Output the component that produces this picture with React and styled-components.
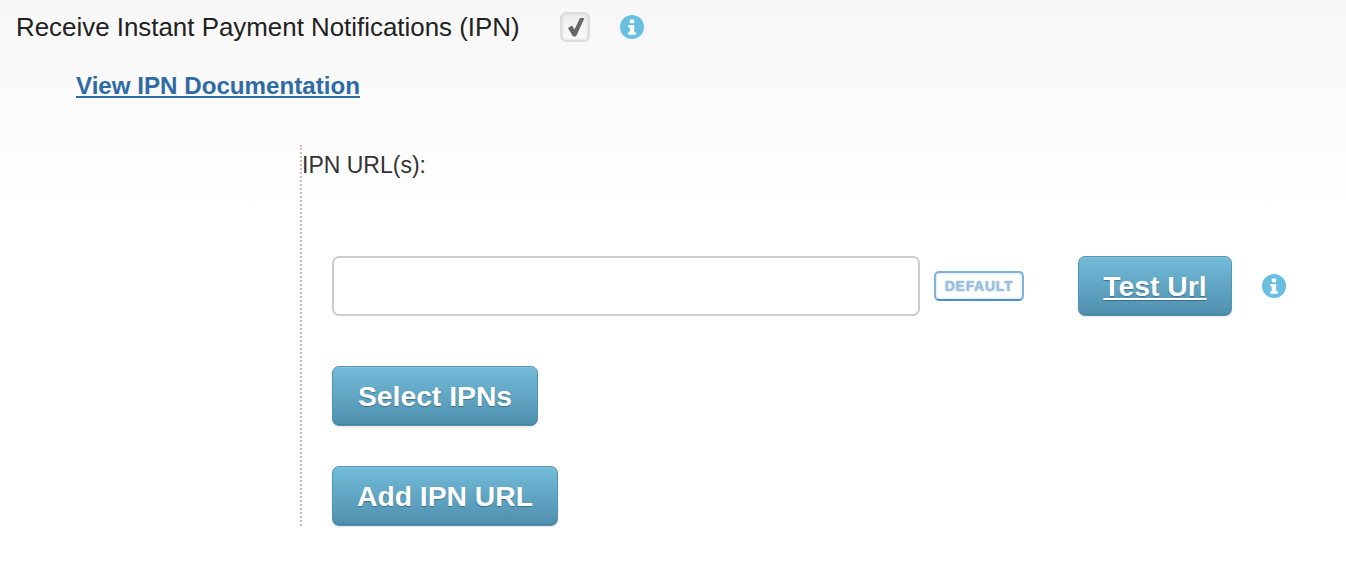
import React from "react";
import styled, { createGlobalStyle } from "styled-components";

const Global = createGlobalStyle`
  html, body { margin: 0; padding: 0; background: #fff; }
  body { font-family: "Liberation Sans", Arial, sans-serif; color: #333; }
`;

const Page = styled.div`
  height: 574px;
  overflow: hidden;
  background: linear-gradient(180deg, #f7f7f7 0, #fbfbfb 110px, #fff 215px);
`;

const TopRow = styled.div`
  display: flex;
  align-items: center;
  height: 54px;
  padding-left: 16px;
`;

const TopLabel = styled.span`
  font-size: 25.9px;
  color: #222;
  width: 544px;
  flex: none;
`;

const CheckBox = styled.span`
  width: 30px;
  height: 30px;
  flex: none;
  box-sizing: border-box;
  border: 2px solid #dcdcdc;
  border-radius: 6px;
  background: linear-gradient(180deg, #eeeeee, #fafafa);
  box-shadow: inset 0 0 3px #cfcfcf;
  display: flex;
  align-items: center;
  justify-content: center;
`;

const InfoWrap = styled.span`
  display: inline-flex;
  flex: none;
  margin-left: ${p => p.$ml}px;
`;

const DocLink = styled.a`
  display: block;
  margin-left: 76px;
  margin-top: 18px;
  font-size: 24.15px;
  line-height: 28px;
  font-weight: bold;
  color: #2f6ba5;
  text-decoration: underline;
  width: fit-content;
`;

const Section = styled.div`
  margin: 45px 0 0 300px;
  height: 381px;
  border-left: 2px dotted #c0c0c0;
  box-sizing: border-box;
  display: flex;
  flex-direction: column;
`;

const SectionLabel = styled.div`
  font-size: 23px;
  line-height: 28px;
  margin-top: 6px;
  color: #333;
`;

const UrlRow = styled.div`
  display: flex;
  align-items: center;
  margin: 77px 0 0 30px;
`;

const UrlInput = styled.input`
  width: 588px;
  height: 60px;
  box-sizing: border-box;
  border: 2px solid #cdcdcd;
  border-radius: 7px;
  background: #fff;
  flex: none;
  outline: none;
`;

const DefaultBadge = styled.span`
  width: 90px;
  height: 30px;
  box-sizing: border-box;
  margin-left: 14px;
  border: 2px solid #7fb2dc;
  border-bottom-color: #4f90cc;
  border-radius: 5px;
  background: #fff;
  color: #9cbfdc;
  font-size: 14px;
  font-weight: bold;
  letter-spacing: 0.7px;
  display: flex;
  align-items: center;
  justify-content: center;
  flex: none;
  box-shadow: inset 0 0 3px #bcd7ee;
  text-shadow: 0 0 2px #8fb7d8;
`;

const BlueButton = styled.button`
  height: 60px;
  width: ${p => p.$w}px;
  flex: none;
  padding: 0;
  box-sizing: border-box;
  border: 1px solid #5594b2;
  border-radius: 7px;
  background: linear-gradient(180deg, #73bcd9 0%, #4f8fae 100%);
  box-shadow: inset 0 1px 0 rgba(255, 255, 255, 0.12), inset 0 -1px 0 #467f9b,
    0 1px 2px rgba(0, 0, 0, 0.12);
  color: #fff;
  font-family: "Liberation Sans", Arial, sans-serif;
  font-size: 28.3px;
  font-weight: bold;
  text-shadow: 0 1px 1px rgba(40, 80, 100, 0.6);
  text-decoration: ${p => (p.$underline ? "underline" : "none")};
  cursor: pointer;
`;

const TestButton = styled(BlueButton)`
  margin-left: 54px;
`;

const StackButton = styled(BlueButton)`
  margin: ${p => p.$mt}px 0 0 30px;
`;

const CheckMark = styled.svg`
  filter: blur(0.7px);
`;

function InfoIcon() {
  return (
    <svg width="24" height="24" viewBox="0 0 24 24">
      <circle cx="12" cy="12" r="12" fill="#68bfdf" />
      <rect x="9.8" y="4.4" width="4.4" height="3.8" rx="0.8" fill="#fff" />
      <path d="M8.2 10h6v7.2h1.6v2.6H8.2v-2.6h1.6v-4.6H8.2z" fill="#fff" />
    </svg>
  );
}

function Check() {
  return (
    <CheckMark width="21" height="21" viewBox="0 0 21 21">
      <path d="M3 11 L7 8.5 L9.5 12.5 L15 1 L19.5 1 L11 19.5 L8 19.5 Z" fill="#666" />
    </CheckMark>
  );
}

export default function App() {
  return (
    <Page>
      <Global />
      <TopRow>
        <TopLabel>Receive Instant Payment Notifications (IPN)</TopLabel>
        <CheckBox><Check /></CheckBox>
        <InfoWrap $ml={30}><InfoIcon /></InfoWrap>
      </TopRow>
      <DocLink href="#">View IPN Documentation</DocLink>
      <Section>
        <SectionLabel>IPN URL(s):</SectionLabel>
        <UrlRow>
          <UrlInput />
          <DefaultBadge>DEFAULT</DefaultBadge>
          <TestButton $w={154} $underline>Test Url</TestButton>
          <InfoWrap $ml={30}><InfoIcon /></InfoWrap>
        </UrlRow>
        <StackButton $w={206} $mt={50}>Select IPNs</StackButton>
        <StackButton $w={226} $mt={40}>Add IPN URL</StackButton>
      </Section>
    </Page>
  );
}
